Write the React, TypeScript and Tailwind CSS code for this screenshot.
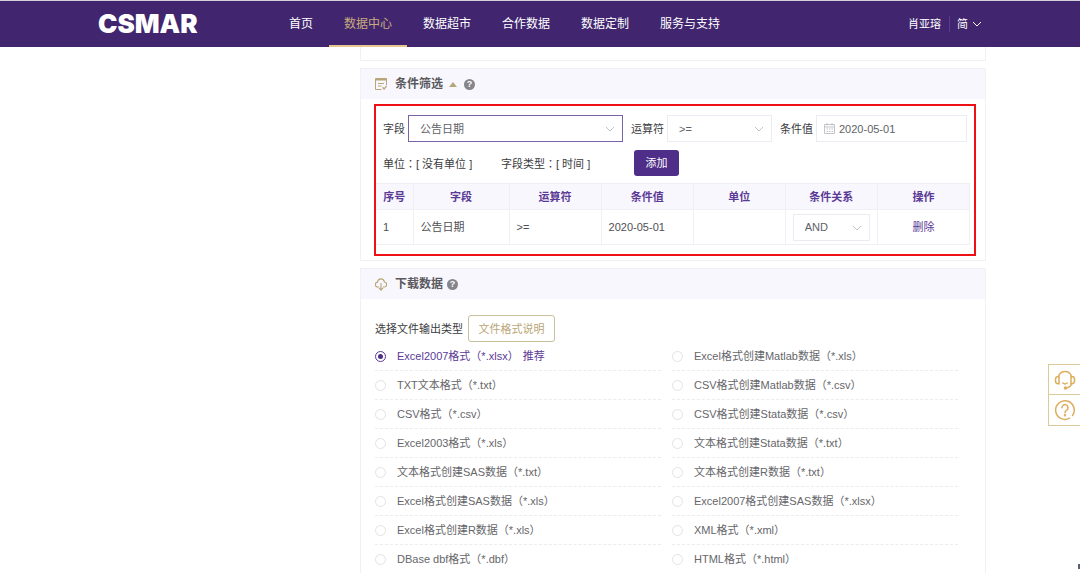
import { useState } from 'react'
import type { ReactNode } from 'react'

// ── Data ──────────────────────────────────────────────────────────────────────
const NAV = ['首页', '数据中心', '数据超市', '合作数据', '数据定制', '服务与支持']
const ACTIVE_NAV = '数据中心'

const COLUMNS = [
  { label: '序号', width: 'w-[37px]' },
  { label: '字段', width: 'w-[96px]' },
  { label: '运算符', width: '' },
  { label: '条件值', width: '' },
  { label: '单位', width: '' },
  { label: '条件关系', width: '' },
  { label: '操作', width: '' },
]

const FORMATS = [
  { label: 'Excel2007格式（*.xlsx）', recommended: true },
  { label: 'Excel格式创建Matlab数据（*.xls）' },
  { label: 'TXT文本格式（*.txt）' },
  { label: 'CSV格式创建Matlab数据（*.csv）' },
  { label: 'CSV格式（*.csv）' },
  { label: 'CSV格式创建Stata数据（*.csv）' },
  { label: 'Excel2003格式（*.xls）' },
  { label: '文本格式创建Stata数据（*.txt）' },
  { label: '文本格式创建SAS数据（*.txt）' },
  { label: '文本格式创建R数据（*.txt）' },
  { label: 'Excel格式创建SAS数据（*.xls）' },
  { label: 'Excel2007格式创建SAS数据（*.xlsx）' },
  { label: 'Excel格式创建R数据（*.xls）' },
  { label: 'XML格式（*.xml）' },
  { label: 'DBase dbf格式（*.dbf）' },
  { label: 'HTML格式（*.html）' },
]

// ── Icons ─────────────────────────────────────────────────────────────────────
function Chevron({ className }: { className: string }) {
  return (
    <svg viewBox="0 0 10 6" className={className} fill="none" stroke="currentColor" aria-hidden>
      <path d="M1 1l4 4 4-4" />
    </svg>
  )
}

function FormIcon() {
  return (
    <svg viewBox="0 0 12 12" className="size-3 text-[#b9a676]" fill="none" stroke="currentColor" aria-hidden>
      <path d="M11.500 7V.5H.5v11h6M3 5.500h6M3 8h3.500" />
      <path d="M.5 1.500h11" strokeWidth="2" />
      <path d="M7.500 9.300l1.600 1.700 2.600-3.200" strokeWidth="1.300" />
    </svg>
  )
}

function CloudIcon() {
  return (
    <svg viewBox="0 0 13 13" className="h-[13px] w-3 text-[#b9a676]" fill="none" stroke="currentColor" strokeWidth="1.200" preserveAspectRatio="none" aria-hidden>
      <path d="M4.500 9H3a2.400 2.400 0 0 1-.3-4.800A3.800 3.800 0 0 1 10.200 4a2.500 2.500 0 0 1-.2 5H8.500" />
      <path d="M6.500 5v7M4.300 9.800l2.200 2.300 2.200-2.300" />
    </svg>
  )
}

function CalendarIcon() {
  return (
    <svg viewBox="0 0 11 11" className="absolute top-2 left-2 size-[11px] text-[#c3c3ca]" fill="none" stroke="currentColor" aria-hidden>
      <path d="M.5 1.500h10v9H.5zM.5 4h10M3 0v2.500M8 0v2.500" />
      <path d="M2.500 6h1.500M5 6h1.500M7.500 6h1.500M2.500 8.500h1.500M5 8.500h1.500M7.500 8.500h1.500" />
    </svg>
  )
}

function HeadsetIcon() {
  return (
    <svg viewBox="0 0 22 22" className="size-[22px]" fill="none" stroke="currentColor" strokeWidth="1.500" strokeLinecap="round" aria-hidden>
      <path d="M4.500 7.500a6.700 6.700 0 0 1 13 0" />
      <path d="M5 7.500v7.200H4.200A2.700 2.700 0 0 1 1.500 12v-1.800a2.700 2.700 0 0 1 2.700-2.700zM17 7.500v7.200h.8a2.700 2.700 0 0 0 2.700-2.700v-1.800a2.700 2.700 0 0 0-2.700-2.700z" />
      <path d="M17.500 15c-.6 2-2.300 3.400-5 3.900M8.800 14c1.200 1 3.200 1 4.400 0" />
      <circle cx="11.500" cy="19" r="1" fill="currentColor" />
    </svg>
  )
}

function QuestionIcon() {
  return (
    <svg viewBox="0 0 22 22" className="size-[22px]" fill="none" stroke="currentColor" strokeWidth="1.500" strokeLinecap="round" aria-hidden>
      <path d="M15.500 19.200a9.300 9.300 0 1 1 3-2.700" />
      <path d="M8 8.700a3 3 0 1 1 4.700 2.400c-1.100.8-1.700 1.300-1.700 2.600" />
      <circle cx="11" cy="16.300" r=".5" fill="currentColor" />
    </svg>
  )
}

function HelpButton() {
  return (
    <button type="button" aria-label="帮助" className="flex size-[11px] items-center justify-center rounded-full bg-[#86868a] text-[9px] leading-none font-bold text-white">
      ?
    </button>
  )
}

// ── Building blocks ───────────────────────────────────────────────────────────
function Panel({ icon, title, extra, children }: { icon: ReactNode; title: string; extra?: ReactNode; children: ReactNode }) {
  return (
    <section className="border border-[#f0f0f5] bg-white">
      <header className="flex h-[30px] items-center bg-[#f8f7fd] px-[14px]">
        {icon}
        <h2 className="mr-1 ml-2 text-xs font-bold text-[#5a5a5e]">{title}</h2>
        {extra}
        <HelpButton />
      </header>
      {children}
    </section>
  )
}

function SelectBox({ id, label, value, className }: { id?: string; label?: string; value: string; className: string }) {
  return (
    <div className="relative flex-1">
      <select
        id={id}
        aria-label={label}
        className={`h-[27px] w-full appearance-none border bg-white pl-[11px] text-[#606266] outline-none ${className}`}
      >
        <option>{value}</option>
      </select>
      <Chevron className="pointer-events-none absolute top-[11px] right-2 h-[6px] w-[10px] text-[#c0c4cc]" />
    </div>
  )
}

// Traditional face centres the full-width colon in its cell
function Colon() {
  return <span className="font-['Noto_Sans_CJK_TC',sans-serif]">：</span>
}

function Header() {
  return (
    <header className="h-[47px] shrink-0 border-t border-[#d5d0de] bg-[#41266f] text-white">
      <div className="mx-auto flex h-full max-w-[892px] items-center px-1">
        <a href="#" className="w-[176px] font-[Inter,sans-serif] text-[26px] leading-none font-black">CSMAR</a>
        <nav className="flex h-full flex-1 gap-px text-xs">
          {NAV.map((item) => (
            <a
              key={item}
              href="#"
              className={`flex items-center border-y-2 border-t-transparent px-[15px] ${item === ACTIVE_NAV ? 'border-b-[#e6c58e] text-[#c9ab7c]' : 'border-b-transparent'}`}
            >
              {item}
            </a>
          ))}
        </nav>
        <a href="#" className="border-r border-[#5b3a96] pr-2">肖亚瑢</a>
        <button type="button" className="ml-[7px] flex items-center gap-1">
          简
          <Chevron className="h-[6px] w-[10px]" />
        </button>
      </div>
    </header>
  )
}

function ConditionPanel() {
  return (
    <Panel
      icon={<FormIcon />}
      title="条件筛选"
      extra={
        <button type="button" aria-label="收起" className="mr-[7px] ml-[2px] border-x-4 border-b-[5px] border-x-transparent border-b-[#b5a67a]" />
      }
    >
      <div className="mt-[5px] mr-[9px] mb-1 ml-[13px] border-2 border-[#ee1014] pt-[9px] pb-[9px]">
        <div className="flex gap-2 px-[7px]">
          <div className="flex flex-1 items-center gap-[3px]">
            <label htmlFor="field">字段</label>
            <SelectBox id="field" value="公告日期" className="border-[#7a62ab]" />
          </div>
          <div className="flex items-center gap-[3px]">
            <label htmlFor="operator">运算符</label>
            <div className="flex w-[105px]">
              <SelectBox id="operator" value=">=" className="border-[#ebebf3]" />
            </div>
          </div>
          <div className="flex items-center gap-[3px]">
            <label htmlFor="date">条件值</label>
            <div className="relative w-[151px]">
              <CalendarIcon />
              <input id="date" type="text" defaultValue="2020-05-01" className="h-[27px] w-full border border-[#ebebf3] pl-[22px] text-[#606266] outline-none" />
            </div>
          </div>
        </div>

        <div className="mt-2 flex items-center px-[7px]">
          <span className="w-[118px]">单位<Colon />[ 没有单位 ]</span>
          <span className="w-[133px]">字段类型<Colon />[ 时间 ]</span>
          <button type="button" className="h-[26px] w-[45px] rounded-[3px] bg-[#4e2e88] text-white">添加</button>
        </div>

        <div className="mt-[7px] mr-1">
          <table className="w-full table-fixed border-collapse">
            <thead>
              <tr className="h-[26px] bg-[#f8f7fd] text-[#5b3a96]">
                {COLUMNS.map((c) => (
                  <th key={c.label} className={`border border-[#f0eff6] font-bold first:border-l-0 ${c.width}`}>{c.label}</th>
                ))}
              </tr>
            </thead>
            <tbody>
              <tr className="h-[35px] text-[#505054] *:border *:border-[#f0eff6] *:px-[7px] *:first:border-l-0">
                <td>1</td>
                <td>公告日期</td>
                <td>&gt;=</td>
                <td>2020-05-01</td>
                <td />
                <td>
                  <div className="flex">
                    <SelectBox label="条件关系" value="AND" className="border-[#ebebf3]" />
                  </div>
                </td>
                <td className="text-center">
                  <button type="button" className="text-[#5b3a96]">删除</button>
                </td>
              </tr>
            </tbody>
          </table>
        </div>
      </div>
    </Panel>
  )
}

function DownloadPanel() {
  const [format, setFormat] = useState(FORMATS[0].label)

  return (
    <Panel icon={<CloudIcon />} title="下载数据">
      <div className="pt-4 pr-[27px] pl-[14px]">
        <div className="flex items-center gap-[5px]">
          <span>选择文件输出类型</span>
          <button type="button" className="h-[27px] w-[87px] rounded-[3px] border border-[#c9bf9c] text-[#b9a676]">文件格式说明</button>
        </div>
        <div className="grid grid-cols-2 gap-x-[11px]">
          {FORMATS.map((f) => (
            <label
              key={f.label}
              className={`flex h-[29px] items-center gap-[11px] border-b border-dashed border-[#ececf0] ${f.label === format ? 'text-[#5b3a96]' : 'text-[#66666a]'}`}
            >
              <input
                type="radio"
                name="format"
                checked={f.label === format}
                onChange={() => setFormat(f.label)}
                className="size-[11px] shrink-0 appearance-none rounded-full border border-[#e2e2e8] bg-white bg-clip-content p-[2px] checked:border-[#5b3a96] checked:bg-[#4e2e88]"
              />
              <span>
                {f.label}
                {f.recommended && <span className="ml-1">推荐</span>}
              </span>
            </label>
          ))}
        </div>
      </div>
    </Panel>
  )
}

// ── Page ──────────────────────────────────────────────────────────────────────
export default function App() {
  return (
    <div className="relative flex h-screen flex-col overflow-hidden bg-white font-['Liberation_Sans','Noto_Sans_CJK_SC',sans-serif] text-[11px] leading-4 text-[#3c3c40]">
      <Header />
      <div className="mx-auto flex w-full max-w-[892px] flex-1">
        <aside className="w-[266px] shrink-0" />
        <main className="flex min-w-0 flex-1 flex-col gap-[7px]">
          <div className="h-[14px] shrink-0 border border-t-0 border-[#f0f0f5]" />
          <ConditionPanel />
          <DownloadPanel />
        </main>
      </div>

      {/* Floating service buttons */}
      <div className="fixed top-[364px] right-0 flex flex-col divide-y divide-[#dccb98] border border-r-0 border-[#dccb98] bg-white text-[#dcae5e]">
        <button type="button" aria-label="在线客服" className="flex h-[30px] w-[31px] items-center justify-center">
          <HeadsetIcon />
        </button>
        <button type="button" aria-label="常见问题" className="flex h-[30px] w-[31px] items-center justify-center">
          <QuestionIcon />
        </button>
      </div>
      <div className="fixed right-0 bottom-1 h-[5px] w-[2px] bg-[#55606c]" />
    </div>
  )
}
